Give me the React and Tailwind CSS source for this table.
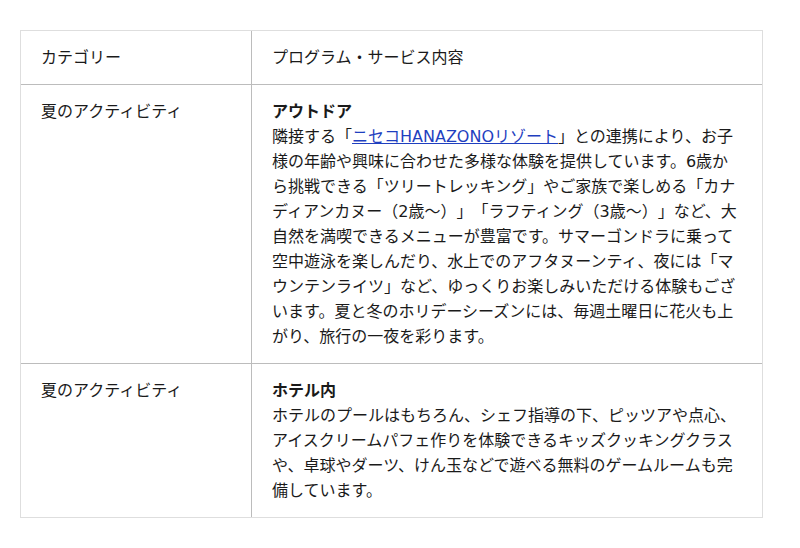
const rows = [
  {
    category: '夏のアクティビティ',
    title: 'アウトドア',
    body: (
      <>
        隣接する「
        <a href="#" className="text-[#1f3fbf] underline">
          ニセコHANAZONOリゾート
        </a>
        」との連携により、お子様の年齢や興味に合わせた多様な体験を提供しています。6歳から挑戦できる「ツリートレッキング」やご家族で楽しめる「カナディアンカヌー（2歳～）」「ラフティング（3歳～）」など、大自然を満喫できるメニューが豊富です。サマーゴンドラに乗って空中遊泳を楽しんだり、水上でのアフタヌーンティ、夜には「マウンテンライツ」など、ゆっくりお楽しみいただける体験もございます。夏と冬のホリデーシーズンには、毎週土曜日に花火も上がり、旅行の一夜を彩ります。
      </>
    ),
  },
  {
    category: '夏のアクティビティ',
    title: 'ホテル内',
    body: 'ホテルのプールはもちろん、シェフ指導の下、ピッツアや点心、アイスクリームパフェ作りを体験できるキッズクッキングクラスや、卓球やダーツ、けん玉などで遊べる無料のゲームルームも完備しています。',
  },
];

export default function App() {
  return (
    <div className="min-h-[548px] bg-white pt-[30px] pl-[20px] font-['DejaVu_Sans','Noto_Sans_CJK_JP',sans-serif] text-[16px] leading-[25px] text-[#1a1a1a] [text-spacing-trim:space-all]">
      <div className="w-[743px] border border-[#dedede]">
        <div className="flex">
          <div className="w-[230px] px-5 py-[14px]">カテゴリー</div>
          <div className="flex-1 border-l border-[#bcbcbc] px-5 py-[14px]">
            プログラム・サービス内容
          </div>
        </div>

        {rows.map((row) => (
          <div key={row.title} className="flex border-t border-[#bcbcbc]">
            <div className="w-[230px] px-5 py-[14px]">{row.category}</div>
            <div className="flex-1 border-l border-[#bcbcbc] px-5 py-[14px]">
              <div className="font-bold">{row.title}</div>
              <p>{row.body}</p>
            </div>
          </div>
        ))}
      </div>
    </div>
  );
}
